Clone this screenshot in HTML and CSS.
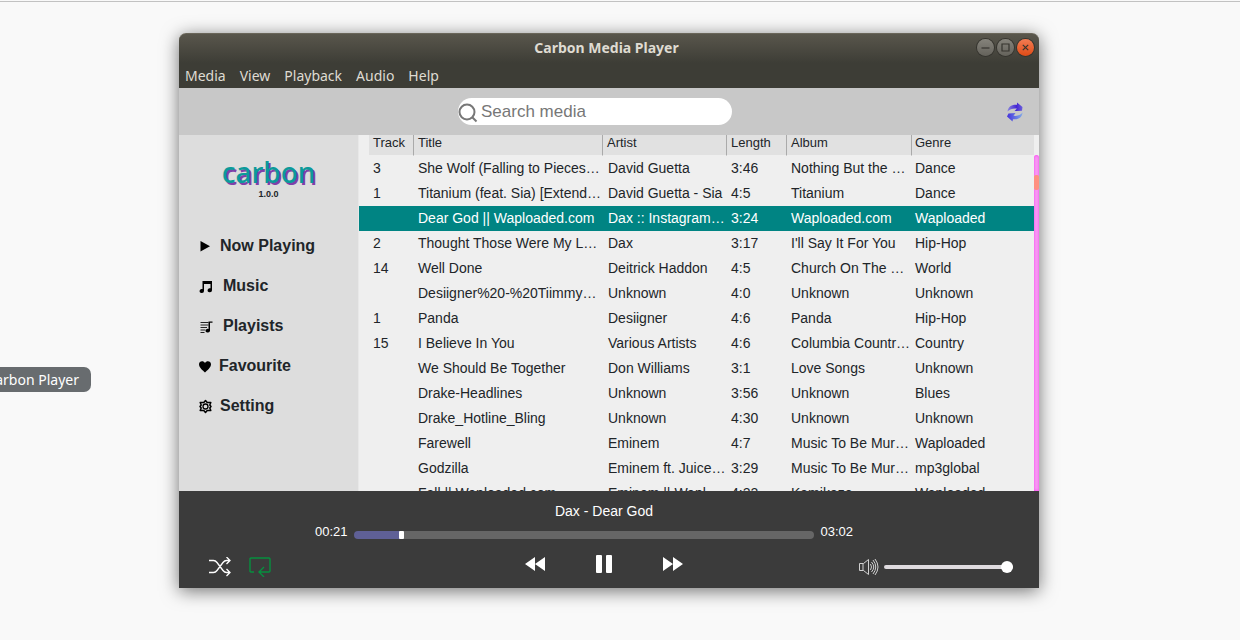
FILE: index.html
```html
<!DOCTYPE html>
<html lang="en">
<head>
<meta charset="utf-8">
<title>Carbon Media Player</title>
<link rel="stylesheet" href="styles.css">
</head>
<body class="desktop">
<div class="launcher-tip">Carbon Player</div>
<div class="window">
  <header class="titlebar">
    <h1 class="titlebar-text">Carbon Media Player</h1>
    <div class="window-buttons">
      <button class="win-btn" type="button" aria-label="Minimise"><svg viewBox="0 0 17 17"><path d="M4.500 9h8"/></svg></button>
      <button class="win-btn" type="button" aria-label="Maximise"><svg viewBox="0 0 17 17"><path d="M5 5h7v7H5z"/></svg></button>
      <button class="win-btn win-close" type="button" aria-label="Close"><svg viewBox="0 0 17 17"><path d="M5.800 5.800l5.400 5.400M11.200 5.800l-5.400 5.400"/></svg></button>
    </div>
  </header>
  <nav class="menubar" aria-label="Application menu">
    <button type="button">Media</button>
    <button type="button">View</button>
    <button type="button">Playback</button>
    <button type="button">Audio</button>
    <button type="button">Help</button>
  </nav>
  <div class="toolbar">
    <form class="search-area" role="search">
      <label class="search">
        <svg class="search-icon" viewBox="0 0 20 20"><circle cx="9" cy="9" r="7.500"/><path d="M14.500 14.500l4 4"/></svg>
        <input class="search-input" type="search" placeholder="Search media" aria-label="Search media">
      </label>
    </form>
    <button class="refresh" type="button" aria-label="Refresh library">
      <svg viewBox="0 0 18 20">
        <defs>
          <linearGradient id="blue-top" x1="0" x2="1"><stop offset="0" stop-color="#8a87dc"/><stop offset=".6" stop-color="#4425d4"/><stop offset="1" stop-color="#6c60da"/></linearGradient>
          <linearGradient id="blue-low" x1="0" x2="1"><stop offset="0" stop-color="#4430dc"/><stop offset="1" stop-color="#80aae8"/></linearGradient>
        </defs>
        <path fill="url(#blue-top)" d="M1.500 9.500C2 5 5.500 2.300 11 2.800L11 .5 16.500 5 16 8.800 8.500 9l2.500-2.500C7 6 4 7 1.500 9.500z"/>
        <path fill="url(#blue-low)" d="M16.500 10.500C16.200 15.500 12 18 7 17.200L6.500 19.500 1 14.500 2.500 11.500l7-.5-2 2.800c3.500.5 6.500-.5 9-3.300z"/>
      </svg>
    </button>
  </div>
  <div class="content">
    <aside class="sidebar">
      <div class="brand">
        <div class="brand-name">carbon</div>
        <div class="brand-version">1.0.0</div>
      </div>
      <nav class="side-nav" aria-label="Library">
        <a href="#now"><svg viewBox="0 0 16 16"><path d="M3.500 3L13 8.200 3.500 13.500z"/></svg>Now Playing</a>
        <a class="wide" href="#music"><svg viewBox="0 0 16 16"><path d="M5.500 3h9.500v9.200a2.200 2 0 1 1-1.500-1.900V6H7v7a2.200 2 0 1 1-1.500-1.900z"/></svg>Music</a>
        <a class="wide" href="#playlists"><svg viewBox="0 0 16 16"><path fill="none" stroke="#222" d="M3.500 4.500h8M3.500 7h8M3.500 9.500h6.500M3.500 12h5M3.500 14.500h4"/><path d="M11.500 3.500h4v1.300H13v8a2.200 1.900 0 1 1-1.500-1.900z"/></svg>Playists</a>
        <a class="narrow" href="#favourite"><svg viewBox="0 0 16 16"><path d="M8 14.500C6 12.500 2 9.500 2 6.200 2 2.800 6.500 2 8 5c1.500-3 6-2.200 6 1.200 0 3.300-4 6.300-6 8.300z"/></svg>Favourite</a>
        <a href="#setting"><svg viewBox="0 0 16 16"><g fill="none" stroke="#000"><path stroke-width="1.500" stroke-linejoin="round" d="M8.500 2.500l1.700 2 3.600 0-1 2.500 1.200 1.500-1.200 1.500 1 2.500-3.600 0-1.700 2-1.700-2-3.600 0 1-2.500L3 8.500 4.200 7l-1-2.500 3.600 0z"/><circle cx="8.500" cy="8.500" r="2.500" stroke-width="1.300"/></g></svg>Setting</a>
      </nav>
    </aside>
    <main class="library">
      <table class="tracks">
        <colgroup><col class="c-track"><col class="c-title"><col class="c-artist"><col class="c-length"><col class="c-album"><col></colgroup>
        <thead><tr><th>Track</th><th>Title</th><th>Artist</th><th>Length</th><th>Album</th><th>Genre</th></tr></thead>
        <tbody>
          <tr><td>3</td><td>She Wolf (Falling to Pieces) [feat. Sia]</td><td>David Guetta</td><td>3:46</td><td>Nothing But the Beat</td><td>Dance</td></tr>
          <tr><td>1</td><td>Titanium (feat. Sia) [Extended Mix]</td><td>David Guetta - Sia</td><td>4:5</td><td>Titanium</td><td>Dance</td></tr>
          <tr class="playing"><td></td><td>Dear God || Waploaded.com</td><td>Dax :: Instagram.com</td><td>3:24</td><td>Waploaded.com</td><td>Waploaded</td></tr>
          <tr><td>2</td><td>Thought Those Were My Last Words</td><td>Dax</td><td>3:17</td><td>I'll Say It For You</td><td>Hip-Hop</td></tr>
          <tr><td>14</td><td>Well Done</td><td>Deitrick Haddon</td><td>4:5</td><td>Church On The Moon</td><td>World</td></tr>
          <tr><td></td><td>Desiigner%20-%20Tiimmy%20Turner</td><td>Unknown</td><td>4:0</td><td>Unknown</td><td>Unknown</td></tr>
          <tr><td>1</td><td>Panda</td><td>Desiigner</td><td>4:6</td><td>Panda</td><td>Hip-Hop</td></tr>
          <tr><td>15</td><td>I Believe In You</td><td>Various Artists</td><td>4:6</td><td>Columbia Country Classics</td><td>Country</td></tr>
          <tr><td></td><td>We Should Be Together</td><td>Don Williams</td><td>3:1</td><td>Love Songs</td><td>Unknown</td></tr>
          <tr><td></td><td>Drake-Headlines</td><td>Unknown</td><td>3:56</td><td>Unknown</td><td>Blues</td></tr>
          <tr><td></td><td>Drake_Hotline_Bling</td><td>Unknown</td><td>4:30</td><td>Unknown</td><td>Unknown</td></tr>
          <tr><td></td><td>Farewell</td><td>Eminem</td><td>4:7</td><td>Music To Be Murdered By</td><td>Waploaded</td></tr>
          <tr><td></td><td>Godzilla</td><td>Eminem ft. Juice WRLD</td><td>3:29</td><td>Music To Be Murdered By</td><td>mp3global</td></tr>
          <tr><td></td><td>Fall || Waploaded.com</td><td>Eminem || Waploaded</td><td>4:22</td><td>Kamikaze</td><td>Waploaded</td></tr>
        </tbody>
      </table>
      <div class="scrollbar"><div class="scroll-thumb"></div></div>
    </main>
  </div>
  <footer class="player">
    <div class="now-title">Dax - Dear God</div>
    <div class="seek-row">
      <span>00:21</span>
      <input class="seek" type="range" min="0" max="1000" value="99" aria-label="Seek">
      <span>03:02</span>
    </div>
    <div class="controls">
      <div class="modes">
        <button type="button" aria-label="Shuffle"><svg width="22" height="20" viewBox="0 0 22 20"><path fill="none" stroke="#fff" stroke-width="1.300" d="M0 3.500h4.500q2 0 3.500 2l6 8q1.500 2 3.500 2H21M0 15.500h4.500q2 0 3.500-2l6-8q1.500-2 3.500-2H21M17.500 0L21 3.500 17.500 7M17.500 12l3.500 3.500-3.500 3.500"/></svg></button>
        <button type="button" aria-label="Repeat"><svg width="22" height="20" viewBox="0 0 22 20"><path fill="none" stroke="#07903f" stroke-width="1.400" d="M5 15H2q-1 0-1-1V2q0-1 1-1h18q1 0 1 1v12q0 1-1 1H10.500M15 10l-5 5 5 5"/></svg></button>
      </div>
      <div class="transport">
        <button type="button" aria-label="Previous"><svg width="21" height="20" viewBox="0 0 21 20"><path fill="#fff" d="M10 3v14L0 10zM20 3v14l-10-7z"/></svg></button>
        <button type="button" aria-label="Pause"><svg width="16" height="20" viewBox="0 0 16 20"><rect width="6" height="18" y="1" rx="1" fill="#fff"/><rect x="10" y="1" width="6" height="18" rx="1" fill="#fff"/></svg></button>
        <button type="button" aria-label="Next"><svg width="21" height="20" viewBox="0 0 21 20"><path fill="#fff" d="M1 3l10 7-10 7zM11 3l10 7-10 7z"/></svg></button>
      </div>
      <div class="volume">
        <button type="button" aria-label="Mute"><svg width="22" height="18" viewBox="0 0 22 18"><path fill="none" stroke="#d0d0d0" d="M1.500 5.500h4L10.500 1.500v15L5.500 12.500h-4zM5 5.500v7M12.500 6q2 3 0 6M13.500 4q4.500 5 0 10M15 2q5.500 7 0 14M17 1q6 8 0 16"/></svg></button>
        <input class="volume-slider" type="range" min="0" max="100" value="100" aria-label="Volume">
      </div>
    </div>
  </footer>
</div>
</body>
</html>
```
FILE: styles.css
```css
* { box-sizing: border-box; }

.desktop {
  display: flex;
  height: 100vh;
  margin: 0;
  padding: 33px 201px 52px 179px;
  overflow: hidden;
  background: linear-gradient(#c2c2c2, #c2c2c2) 0 1px / 100% 1px no-repeat #f9f9f9;
  color: #212529;
  font: 14px "Liberation Sans", Arial, sans-serif;
}

button {
  display: flex;
  padding: 0;
  border: 0;
  background: none;
  color: inherit;
  font: inherit;
}

.launcher-tip {
  position: absolute;
  left: 0;
  top: 367px;
  display: flex;
  justify-content: flex-end;
  width: 91px;
  height: 25px;
  padding-right: 12px;
  overflow: hidden;
  border-radius: 0 7px 7px 0;
  background: #686c6f;
  color: #fff;
  font: 14px/25px "Noto Sans", sans-serif;
  white-space: nowrap;
}

.window {
  display: flex;
  flex: 1;
  flex-direction: column;
  min-width: 0;
  border-radius: 7px 7px 0 0;
  box-shadow: 0 3px 18px rgba(0, 0, 0, .55);
}

.titlebar {
  display: grid;
  grid-template-columns: 1fr auto 1fr;
  align-items: center;
  height: 30px;
  padding: 0 5px 2px 0;
  border-top: 1px solid #6a665a;
  border-radius: 7px 7px 0 0;
  background: linear-gradient(#59564c, #3d3d36);
}

.titlebar-text {
  grid-column: 2;
  margin: 0;
  color: #dfdbd2;
  font: bold 14px/26px "Noto Sans", sans-serif;
}

.window-buttons {
  display: flex;
  justify-content: flex-end;
  gap: 3px;
}

.win-btn {
  width: 17px;
  height: 17px;
  border-radius: 50%;
  background: linear-gradient(#85837b, #64625b);
  box-shadow: 0 0 0 1px #35342f;
}

.win-btn path {
  fill: none;
  stroke: #36352f;
  stroke-width: 1.2;
}

.win-close { background: linear-gradient(#f37c53, #df4b16); }

.menubar {
  display: flex;
  gap: 14px;
  height: 25px;
  padding: 0 6px;
  background: #3d3d36;
  color: #dfdbd2;
  font: 14px/25px "Noto Sans", sans-serif;
}

.toolbar {
  display: flex;
  align-items: center;
  height: 47px;
  padding: 0 15px 0 5px;
  background: #c8c8c8;
}

.search-area {
  display: flex;
  flex: 1;
  justify-content: center;
}

.search {
  display: flex;
  align-items: center;
  width: 274px;
  height: 27px;
  border-radius: 14px;
  background: #fff;
}

.search-icon {
  width: 20px;
  height: 20px;
  margin-top: 3px;
  fill: none;
  stroke: #777;
  stroke-width: 2;
}

.search-input {
  flex: 1;
  min-width: 0;
  padding: 0 3px;
  border: 0;
  outline: 0;
  background: none;
  font: 17px "Liberation Sans", Arial, sans-serif;
}

.search-input::placeholder { color: #777; }

.refresh {
  width: 18px;
  height: 20px;
}

.content {
  display: flex;
  flex: 1;
  min-height: 0;
}

.sidebar {
  width: 180px;
  padding-top: 21px;
  border-right: 1px solid #e8e8e8;
  background: #ddd;
}

.brand { text-align: center; }

.brand-name {
  color: #0c9a9a;
  font: 500 28px/32px "Noto Sans", sans-serif;
  text-shadow: 2px 2px #8040a8;
}

.brand-version {
  font-size: 9px;
  font-weight: bold;
  line-height: 12px;
}

.side-nav {
  display: flex;
  flex-direction: column;
  margin-top: 26px;
  padding-left: 18px;
}

.side-nav a {
  display: flex;
  align-items: center;
  gap: 7px;
  height: 40px;
  color: #212529;
  font-size: 16px;
  font-weight: bold;
  text-decoration: none;
}

.side-nav svg {
  width: 16px;
  height: 16px;
}

.side-nav .wide { gap: 10px; }
.side-nav .narrow { gap: 6px; }

.library {
  display: flex;
  flex: 1;
  min-width: 0;
  overflow: hidden;
  background: #efefef;
}

.tracks {
  flex: 1;
  width: 100%;
  min-width: 0;
  height: max-content;
  border-collapse: separate;
  border-spacing: 0;
  table-layout: fixed;
}

.c-track { width: 54px; }
.c-title { width: 189px; }
.c-artist { width: 124px; }
.c-length { width: 60px; }
.c-album { width: 125px; }

.tracks th {
  height: 21px;
  padding: 0 0 5px 4px;
  border-bottom: 1px solid #efefef;
  border-left: 1px solid #aaa;
  background: #e1e1e1;
  font-size: 13px;
  font-weight: normal;
  line-height: 15px;
  text-align: left;
}

.tracks th:first-child { border-left: 10px solid #efefef; }
.tracks th:last-child { padding-left: 3px; }

.tracks td {
  height: 25px;
  padding: 0 0 0 5px;
  overflow: hidden;
  line-height: 25px;
  text-overflow: ellipsis;
  white-space: nowrap;
}

.tracks td:first-child { padding-left: 14px; }
.tracks td:nth-child(3) { padding-left: 6px; }
.tracks td:last-child { padding-left: 4px; }

.playing {
  background: #008483;
  color: #fff;
}

.scrollbar {
  width: 5px;
  margin-top: 20px;
  padding-top: 20px;
  border-radius: 3px 3px 0 0;
  background: #f6a0f2;
  box-shadow: inset 0 0 3px #ff2cf5;
}

.scroll-thumb {
  height: 15px;
  border-radius: 2px;
  background: #ff9080;
}

.player {
  height: 97px;
  padding: 10px 26px 0 16px;
  background: #3b3b3b;
  color: #fff;
}

.now-title {
  line-height: 20px;
  text-align: center;
}

.seek-row {
  display: flex;
  gap: 6px;
  height: 28px;
  padding: 0 160px 0 120px;
  font-size: 13px;
  line-height: 22px;
}

.seek, .volume-slider {
  margin: 0;
  appearance: none;
}

.seek {
  flex: 1;
  min-width: 0;
  height: 8px;
  margin-top: 10px;
  border-radius: 4px;
  background: linear-gradient(#5f6096, #5f6096) 0 0 / 10% 100% no-repeat #666;
}

.seek::-webkit-slider-thumb {
  width: 5px;
  height: 8px;
  border-radius: 1px;
  background: #fff;
  appearance: none;
}

.controls {
  display: grid;
  grid-template-columns: 1fr auto 1fr;
}

.modes, .transport, .volume {
  display: flex;
  align-items: center;
}

.modes {
  gap: 18px;
  padding: 5px 0 0 14px;
}

.transport {
  gap: 50px;
  height: 30px;
}

.volume {
  justify-content: flex-end;
  gap: 4px;
  padding-top: 5px;
}

.volume-slider {
  width: 129px;
  height: 4px;
  border-radius: 2px;
  background: #dfdbdf;
}

.volume-slider::-webkit-slider-thumb {
  width: 12px;
  height: 12px;
  border-radius: 50%;
  background: #fff;
  appearance: none;
}
```
